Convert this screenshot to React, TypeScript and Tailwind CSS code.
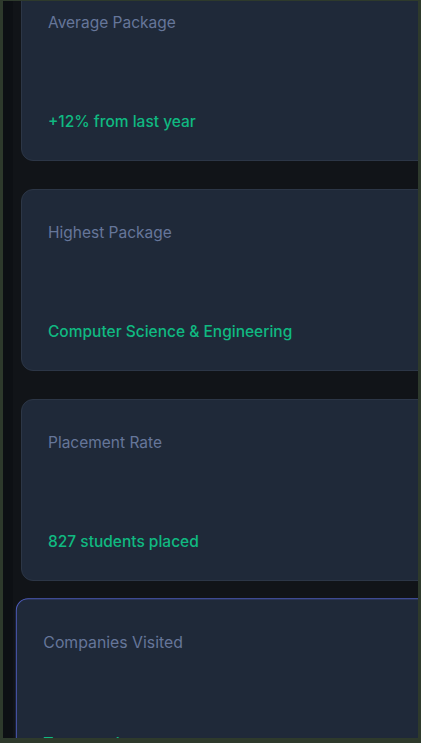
import React from "react";

type CardProps = { label: string; sub: string; active?: boolean };

function StatCard({ label, sub, active }: CardProps) {
  return (
    <div
      className={
        active
          ? "box-border flex h-[182px] w-[520px] shrink-0 origin-center -translate-y-[9px] scale-[1.02] flex-col rounded-xl border border-[#4d5bb8] bg-[#1f2939] pl-[26px] pt-[33px]"
          : "box-border flex h-[182px] w-[520px] shrink-0 flex-col rounded-xl border border-[#2c3646] bg-[#1f2939] pl-[26px] pt-[33px]"
      }
    >
      <div className="h-5 text-[15.5px] leading-5 text-[#66769a]">{label}</div>
      <div className="h-[79px]" />
      <div className="h-5 text-[15.5px] font-medium leading-5 text-[#10b981]">{sub}</div>
    </div>
  );
}

export default function App() {
  return (
    <div
      className="box-border h-[743px] w-[421px] overflow-hidden bg-[#2e3a2c] pb-[5px] pl-[3px] pr-[3px] pt-px"
      style={{ fontFamily: "Inter, 'Noto Sans', sans-serif" }}
    >
      <div className="flex h-full w-full overflow-hidden bg-[#111418]">
        <div className="w-[10px] shrink-0 bg-[#0d1014]" />
        <div className="-mt-[22px] flex shrink-0 flex-col gap-[28px] pl-[8px]">
          <StatCard label="Average Package" sub="+12% from last year" />
          <StatCard label="Highest Package" sub="Computer Science & Engineering" />
          <StatCard label="Placement Rate" sub="827 students placed" />
          <StatCard label="Companies Visited" sub="Top recruiters on campus" active />
        </div>
      </div>
    </div>
  );
}
